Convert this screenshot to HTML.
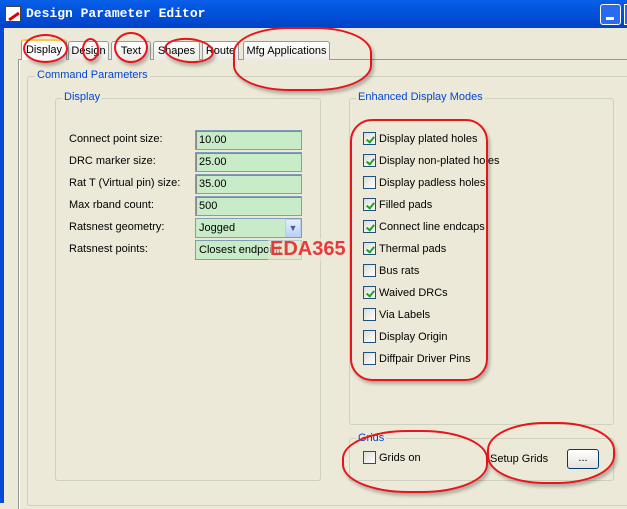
<!DOCTYPE html>
<html><head><meta charset="utf-8"><style>
*{margin:0;padding:0;box-sizing:border-box}
body{width:627px;height:503px;overflow:hidden;background:#ECE9D8;font-family:"Liberation Sans",Tahoma,sans-serif;font-size:11px;color:#000;position:relative}
.a{position:absolute}
.title{left:0;top:0;width:627px;height:28px;background:linear-gradient(#0A5FE8,#0256E0 30%,#0042C8);}
.title span{position:absolute;left:26px;top:6px;color:#fff;font-family:"Liberation Mono",monospace;font-weight:bold;font-size:13px}
.lb{left:0;top:28px;width:4px;height:475px;background:#0848D8}
.grp{border:1px solid #D0D0BF;border-radius:3px}
.lg{color:#0046D5;background:#ECE9D8;padding:0 2px}
.tab{top:41px;height:19px;border:1px solid #919B9C;border-bottom:none;border-radius:3px 3px 0 0;background:linear-gradient(#fff,#ECEBE6);text-align:center;line-height:18px;font-size:11px}
.inp{left:195px;width:107px;height:20px;border:1px solid #7F9DB9;background:#C8EBC8;padding:0 3px;line-height:18px;font-size:11px;box-shadow:inset 1px 1px 0 #888}
.cb{width:13px;height:13px;border:1px solid #1C5180;background:linear-gradient(135deg,#DCDCD7,#fff)}
.cb.k::after{content:"";position:absolute;left:4px;top:2px;width:3px;height:6px;border:solid #21A121;border-width:0 2px 2px 0;transform:rotate(40deg)}
.ov{border:2px solid #E8141A;border-radius:50%;box-shadow:2px 3px 3px rgba(0,0,0,0.25)}
</style></head><body>
<div class="a title"><div class="a" style="left:5px;top:6px;width:16px;height:16px;background:#fff;border:1px solid #444"><div class="a" style="left:2px;top:8px;width:12px;height:3px;background:#d00;transform:rotate(-35deg)"></div></div><span>Design Parameter Editor</span>
<div class="a" style="left:600px;top:4px;width:21px;height:21px;border:1px solid #fff;border-radius:3px;background:#2A6AF0"><div class="a" style="left:5px;top:12px;width:8px;height:3px;background:#fff"></div></div>
<div class="a" style="left:624px;top:4px;width:5px;height:21px;border:1px solid #fff;background:#2A6AF0"></div></div>
<div class="a lb"></div>
<div class="a" style="left:18px;top:59px;width:620px;height:450px;border-left:1px solid #919B9C;border-top:1px solid #919B9C;box-shadow:inset 1px 0 0 #fff"></div>
<div class="a tab" style="left:68px;width:41px">Design</div>
<div class="a tab" style="left:111px;width:40px">Text</div>
<div class="a tab" style="left:153px;width:47px">Shapes</div>
<div class="a tab" style="left:202px;width:37px">Route</div>
<div class="a tab" style="left:243px;width:87px">Mfg Applications</div>
<div class="a tab" style="left:21px;top:39px;height:21px;width:46px;border-top:2px solid #FFC83C;background:#FCFCFE;line-height:19px">Display</div>

<div class="a grp" style="left:27px;top:76px;width:610px;height:430px"></div>
<div class="a lg" style="left:35px;top:69px">Command Parameters</div>

<div class="a grp" style="left:55px;top:98px;width:266px;height:383px"></div>
<div class="a lg" style="left:62px;top:91px">Display</div>
<div class="a" style="left:69px;top:133px">Connect point size:</div>
<div class="a" style="left:69px;top:155px">DRC marker size:</div>
<div class="a" style="left:69px;top:177px">Rat T (Virtual pin) size:</div>
<div class="a" style="left:69px;top:199px">Max rband count:</div>
<div class="a" style="left:69px;top:221px">Ratsnest geometry:</div>
<div class="a" style="left:69px;top:243px">Ratsnest points:</div>
<div class="a inp" style="top:130px">10.00</div>
<div class="a inp" style="top:152px">25.00</div>
<div class="a inp" style="top:174px">35.00</div>
<div class="a inp" style="top:196px">500</div>
<div class="a inp" style="top:218px;box-shadow:none">Jogged</div>
<div class="a inp" style="top:240px;box-shadow:none">Closest endpoint</div>
<div class="a" style="left:285px;top:219px;width:16px;height:18px;border:1px solid #B7CDF5;border-radius:2px;background:linear-gradient(#E6EEFC,#B9D1FA);color:#4D6185;text-align:center;font-size:9px;line-height:16px">&#9660;</div>
<div class="a" style="left:268px;top:238px;font-weight:bold;font-size:20px;color:#E83A3A;background:rgba(236,233,216,0.6);padding:0 2px">EDA365</div>

<div class="a grp" style="left:349px;top:98px;width:265px;height:327px"></div>
<div class="a lg" style="left:356px;top:91px">Enhanced Display Modes</div>

<div class="a cb k" style="left:363px;top:132px"></div><div class="a" style="left:379px;top:133px">Display plated holes</div>
<div class="a cb k" style="left:363px;top:154px"></div><div class="a" style="left:379px;top:155px">Display non-plated holes</div>
<div class="a cb" style="left:363px;top:176px"></div><div class="a" style="left:379px;top:177px">Display padless holes</div>
<div class="a cb k" style="left:363px;top:198px"></div><div class="a" style="left:379px;top:199px">Filled pads</div>
<div class="a cb k" style="left:363px;top:220px"></div><div class="a" style="left:379px;top:221px">Connect line endcaps</div>
<div class="a cb k" style="left:363px;top:242px"></div><div class="a" style="left:379px;top:243px">Thermal pads</div>
<div class="a cb" style="left:363px;top:264px"></div><div class="a" style="left:379px;top:265px">Bus rats</div>
<div class="a cb k" style="left:363px;top:286px"></div><div class="a" style="left:379px;top:287px">Waived DRCs</div>
<div class="a cb" style="left:363px;top:308px"></div><div class="a" style="left:379px;top:309px">Via Labels</div>
<div class="a cb" style="left:363px;top:330px"></div><div class="a" style="left:379px;top:331px">Display Origin</div>
<div class="a cb" style="left:363px;top:352px"></div><div class="a" style="left:379px;top:353px">Diffpair Driver Pins</div>

<div class="a grp" style="left:349px;top:438px;width:265px;height:43px"></div>
<div class="a lg" style="left:356px;top:432px">Grids</div>
<div class="a cb" style="left:363px;top:451px"></div><div class="a" style="left:379px;top:452px">Grids on</div>
<div class="a" style="left:490px;top:453px">Setup Grids</div>
<div class="a" style="left:567px;top:449px;width:32px;height:20px;border:1px solid #003C74;border-radius:3px;background:linear-gradient(#fff,#E3E2DA);text-align:center;line-height:16px">...</div>

<div class="a ov" style="left:23px;top:34px;width:45px;height:29px"></div>
<div class="a ov" style="left:82px;top:38px;width:17px;height:23px"></div>
<div class="a ov" style="left:114px;top:32px;width:34px;height:31px"></div>
<div class="a ov" style="left:164px;top:38px;width:50px;height:25px;transform:rotate(5deg)"></div>
<div class="a ov" style="left:233px;top:27px;width:139px;height:64px;border-radius:40%"></div>
<div class="a ov" style="left:350px;top:119px;width:138px;height:262px;border-radius:22px"></div>
<div class="a ov" style="left:342px;top:430px;width:146px;height:63px;border-radius:45%"></div>
<div class="a ov" style="left:487px;top:422px;width:128px;height:62px;border-radius:45%"></div>
</body></html>
